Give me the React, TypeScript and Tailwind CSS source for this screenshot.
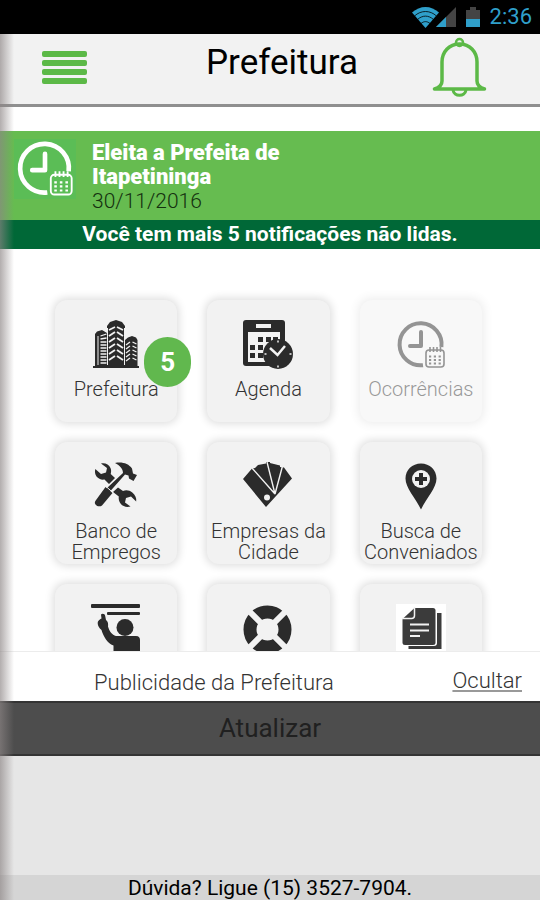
import React from 'react';

interface MenuItem {
  id: string;
  name: string;
  label?: string;
  icon: React.ReactNode;
  badge?: number;
  disabled?: boolean;
}

function ClockCalendarIcon({ className }: { className: string }) {
  return (
    <svg viewBox="0 0 50 50" className={className} fill="none" stroke="currentColor">
      <path d="M27 45.2A21 21 0 1 1 45.4 27" strokeWidth="4" />
      <path d="M25 12v14H14" strokeWidth="4" strokeLinecap="round" strokeLinejoin="round" />
      <rect x="30" y="30" width="18" height="17" rx="3" strokeWidth="1.600" />
      <path d="M34 27v5M37.500 27v5M41 27v5M44.500 27v5" strokeWidth="1.600" />
      <path d="M33 36.500h12M33 40h12M33 43.500h12" strokeWidth="1.800" strokeDasharray="2.200 2.600" />
    </svg>
  );
}

function BuildingsIcon() {
  return (
    <svg viewBox="0 0 50 50" className="h-[50px] w-[50px] text-[#2b2b2b]" fill="currentColor">
      <path d="M2 48v-2h2V14l2-2.500 5-1.500 5 3V6l3-4 6-2 6 2 3 4v14l3-2.500 4-1.500 4 1.500L46.500 20v26H48v2z" />
      <g fill="none" stroke="#f2f2f2" strokeWidth="1.800">
        <path d="M18 10l6-3M18 16l6-4M18 22l6-4M18 28l6-4M18 34l6-4M18 40l6-4" />
        <path d="M32 10l-6-3M32 16l-6-4M32 22l-6-4M32 28l-6-4M32 34l-6-4M32 40l-6-4" />
      </g>
      <g fill="none" stroke="#f2f2f2" strokeWidth="1.300">
        <path d="M9.500 16l6-2M9.500 19l6-1M9.500 22h6M9.500 25h6M9.500 28h6M9.500 31h6M9.500 34h6M9.500 37h6M9.500 40h6M9.500 43h6" />
        <path d="M35 25l4-3M35 29l4-3M35 33l4-3M35 37l4-3M35 41l4-3" />
        <path d="M45.500 24l-4-2M45.500 28l-4-2M45.500 32l-4-2M45.500 36l-4-2M45.500 40l-4-2" />
        <path d="M16.500 8v37M33.500 8v37M7 16v29" strokeWidth="1" />
      </g>
    </svg>
  );
}

function AgendaIcon() {
  return (
    <svg viewBox="0 0 50 50" className="h-[50px] w-[50px] text-[#2b2b2b]" fill="currentColor">
      <rect width="42" height="46" rx="3" />
      <rect x="13" y="4" width="15" height="4" fill="#f2f2f2" />
      <rect x="5" y="12" width="32" height="30" fill="#f2f2f2" />
      <path d="M15 17h5v5h-5zM23 17h5v5h-5zM30 17h5v5h-5zM7 25h5v5H7zM15 25h5v5h-5zM7 33h5v5H7zM15 33h5v5h-5z" />
      <circle cx="35" cy="34" r="15" />
      <path d="M27 28l7.500 7L42 26" fill="none" stroke="#f2f2f2" strokeWidth="2.500" />
      <path d="M35 20.500v2M35 45.500v2M21.500 34h2M46.500 34h2" stroke="#f2f2f2" strokeWidth="1.500" />
    </svg>
  );
}

function ToolsIcon() {
  return (
    <svg viewBox="0 0 50 50" className="h-[50px] w-[50px] text-[#2b2b2b]" fill="currentColor">
      <path d="M10 1.500c4-1 8 1 9.500 4.500.9 2.200.7 4 .2 6L24 16l-6 6-4.500-4.500c-3 .5-6-.5-8-3C4 12.500 3.600 9.500 4.300 7L10 12l5-1.500 1-4.500z" />
      <path d="M27 25.500l5 3.500c3-1.200 6.500-.8 9.300 1.500 3 2.500 4.400 5.800 3.900 9L40 34.500l-5 1.500-1 4.500 5.500 4c-3.500 1-7.500.3-9.800-2.700-1.700-2.200-2.300-4.700-1.900-7.200L22 30z" />
      <path d="M24 1c7-1.500 13.500.500 17 5.500l1 5 4 1.500-3.500 6-4.500-2.500-.5-3-3.500-1-15 17-3.500-3L32 11c0-4-3-7.500-8-10z" />
      <path d="M14.500 25l7 6L11 43.500c-2 1.500-5 1-6.500-1-1-1.500-.8-2.800.2-4z" />
      <path d="M15 24.500l7.500 6.500" fill="none" stroke="#f2f2f2" strokeWidth="1" />
    </svg>
  );
}

function SwatchesIcon() {
  return (
    <svg viewBox="0 0 50 50" className="h-[50px] w-[50px] text-[#2b2b2b]" fill="currentColor">
      <path d="M0 17L9 6.500l3-.5 3-3 8-1.500V-1l4 .5V1l10 2.500v1.500l4 .5L49 16.500 23 45z" />
      <path d="M9 6l23 26L24 0M39.500 4L32 32" fill="none" stroke="#f2f2f2" strokeWidth="1.400" />
      <circle cx="24" cy="35.500" r="3" fill="#f2f2f2" />
    </svg>
  );
}

function PinIcon() {
  return (
    <svg viewBox="0 0 50 50" className="h-[50px] w-[50px] text-[#2b2b2b]" fill="currentColor">
      <path d="M25 1.500c8.800 0 15.500 6.500 15.500 15C40.500 26 31 35 25 47.500 19 35 9.500 26 9.500 16.500c0-8.500 6.700-15 15.500-15z" />
      <circle cx="25" cy="17" r="9" fill="#f2f2f2" />
      <path d="M25 11v12M19 17h12" stroke="currentColor" strokeWidth="4" />
    </svg>
  );
}

function PassengerIcon() {
  return (
    <svg viewBox="0 0 50 50" className="h-[50px] w-[50px] text-[#2b2b2b]" fill="currentColor">
      <rect y="0" width="49" height="4" rx="1" />
      <rect x="16" y="8" width="33" height="3" rx="1" />
      <circle cx="34" cy="23.500" r="8.500" />
      <path d="M10 10.500c1.500-1.500 4-.5 4.200 1.500l.8 4c2 1.500 2.300 3.500 2 6.500 1.500 5 4 8.500 8 9.500h20c3 0 4 2 4 4v14H22.500v-8.500C16 39 12.500 32.500 10.500 26 7.500 23.500 6 20 7 17.500c1-1.500 2-2.500 3.500-3z" />
    </svg>
  );
}

function LifebuoyIcon() {
  return (
    <svg viewBox="0 0 50 50" className="h-[50px] w-[50px] text-[#2b2b2b]" fill="none">
      <circle cx="24.500" cy="25.500" r="17.500" stroke="currentColor" strokeWidth="13" />
      <path d="M6 7l37 37M43 7L6 44" stroke="#f2f2f2" strokeWidth="6" />
    </svg>
  );
}

function DocumentsIcon() {
  return (
    <svg viewBox="0 0 50 50" className="h-[50px] w-[50px] bg-white text-[#3b3b3b]" fill="currentColor">
      <path d="M41 9h4.500v36H12.500v-3H38a3 3 0 0 0 3-3z" />
      <path d="M18.500 4H37a2.500 2.500 0 0 1 2.500 2.500v32A2.500 2.500 0 0 1 37 41H9a2.500 2.500 0 0 1-2.500-2.500V15z" />
      <path d="M18.500 3v8.500a3 3 0 0 1-3 3H6" fill="none" stroke="#f2f2f2" strokeWidth="1.500" />
      <path d="M14 20.500h19M14 26.500h19M14 32h10" stroke="#f2f2f2" strokeWidth="2" />
    </svg>
  );
}

const menuItems: MenuItem[] = [
  { id: 'prefeitura', name: 'Prefeitura', label: 'Prefeitura', icon: <BuildingsIcon />, badge: 5 },
  { id: 'agenda', name: 'Agenda', label: 'Agenda', icon: <AgendaIcon /> },
  {
    id: 'ocorrencias',
    name: 'Ocorrências',
    label: 'Ocorrências',
    icon: <ClockCalendarIcon className="h-[50px] w-[50px] text-[#2b2b2b]" />,
    disabled: true
  },
  { id: 'empregos', name: 'Banco de Empregos', label: 'Banco de Empregos', icon: <ToolsIcon /> },
  { id: 'empresas', name: 'Empresas da Cidade', label: 'Empresas da Cidade', icon: <SwatchesIcon /> },
  { id: 'conveniados', name: 'Busca de Conveniados', label: 'Busca de Conveniados', icon: <PinIcon /> },
  { id: 'transporte', name: 'Transporte', icon: <PassengerIcon /> },
  { id: 'ajuda', name: 'Ajuda', icon: <LifebuoyIcon /> },
  { id: 'documentos', name: 'Documentos', icon: <DocumentsIcon /> }
];

function StatusBar() {
  return (
    <div className="flex h-[34px] shrink-0 items-center justify-end bg-black pr-2 text-[#2f9fca]">
      <svg viewBox="0 0 70 24" className="mr-2 h-6 w-[70px]">
        <path d="M0 7.500C8 0 19 0 27 7.500L13.500 23z" fill="#2f9fca" />
        <path d="M2.500 11c6.500-6 15.500-6 22 0M5.500 14.500c5-4.500 11-4.500 16 0M9 18.500c3-2.500 6-2.500 9 0" fill="none" stroke="#000" strokeWidth="0.800" />
        <path d="M44 2v20H24z" fill="#444" />
        <path d="M34 12v10H24z" fill="#2f9fca" />
        <path d="M54 5h4V2h6v3h4v9H54z" fill="#444" />
        <path d="M54 14h14v8H54z" fill="#2f9fca" />
      </svg>
      <span className="text-[22px] leading-6">2:36</span>
    </div>
  );
}

function MenuCard({ item }: { item: MenuItem }) {
  return (
    <button
      type="button"
      aria-label={item.name}
      disabled={item.disabled}
      className="relative flex h-[122px] flex-col items-center rounded-xl bg-[#f2f2f2] pt-5
                 shadow-[0_0_8px_2px_#dedede] disabled:opacity-50"
    >
      {item.icon}
      {item.label && (
        <span className="mt-[9px] text-[20px] leading-[21px] font-light text-[#333]">{item.label}</span>
      )}
      {item.badge && (
        <span
          className="absolute top-[37px] -right-[14px] flex h-[50px] w-[47px] items-center justify-center
                     rounded-full bg-[#61b84e] text-[26px] font-bold text-white"
        >
          {item.badge}
        </span>
      )}
    </button>
  );
}

export default function App() {
  return (
    <div className="relative flex h-screen flex-col overflow-hidden bg-white font-['Roboto',sans-serif] text-black">
      <StatusBar />

      <header className="flex h-[73px] shrink-0 items-center border-b-3 border-[#8f8f8f] bg-[#f2f2f2] pr-[52px] pb-1 pl-[42px]">
        <button type="button" aria-label="Menu" className="flex w-[90px] flex-col gap-[3px]">
          <span className="h-[6px] w-[45px] rounded-xs bg-[#5cb947]" />
          <span className="h-[6px] w-[45px] rounded-xs bg-[#5cb947]" />
          <span className="h-[6px] w-[45px] rounded-xs bg-[#5cb947]" />
          <span className="h-[6px] w-[45px] rounded-xs bg-[#5cb947]" />
        </button>
        <h1 className="flex-1 pb-2 text-center text-[35px] leading-10">Prefeitura</h1>
        <button type="button" aria-label="Notificações">
          <svg viewBox="0 0 56 60" className="h-[60px] w-14" fill="none" stroke="#5cb947" strokeWidth="3.500">
            <path d="M2.500 52h50c-5-1.500-7.500-4-7.500-8V25c0-10-7-18-17.500-18S10 15 10 25v19c0 4-2.500 6.500-7.500 8z" strokeLinejoin="round" />
            <circle cx="27.500" cy="5.500" r="3.500" strokeWidth="2.500" />
            <path d="M21 53c1 7 12 7 13 0" strokeWidth="3" />
          </svg>
        </button>
      </header>

      <section className="mt-6 shrink-0">
        <div className="flex h-[89px] items-start gap-4 bg-[#66bc50] pt-2 pl-[14px]">
          <div className="flex h-[60px] w-[62px] items-center justify-center bg-[#5bbd56] text-white">
            <ClockCalendarIcon className="h-[58px] w-[58px]" />
          </div>
          <div className="mt-[2px] w-[240px] leading-6">
            <h2 className="text-[22px] leading-6 font-black text-white">Eleita a Prefeita de Itapetininga</h2>
            <p className="text-[21px] leading-6 font-light text-[#14300f]">30/11/2016</p>
          </div>
        </div>
        <p className="bg-[#006837] text-center text-[21px] leading-[29px] font-bold text-white">
          Você tem mais 5 notificações não lidas.
        </p>
      </section>

      <main className="min-h-0 flex-1 overflow-y-auto pt-[51px] pr-[58px] pl-[55px] [scrollbar-width:none]">
        <div className="grid grid-cols-3 gap-x-[30px] gap-y-5">
          {menuItems.map((item) => (
            <MenuCard key={item.id} item={item} />
          ))}
        </div>
      </main>

      <footer className="relative shrink-0">
        <div className="flex h-[50px] items-center justify-between border-t border-[#ececec] bg-white pr-[18px] pl-[94px] font-light text-[#333]">
          <span className="pt-3 text-[22px]">Publicidade da Prefeitura</span>
          <a href="#ocultar" className="pt-2 text-[22px] underline decoration-[#999]">Ocultar</a>
        </div>
        <button
          type="button"
          className="h-[55px] w-full border-y-2 border-[#343434] bg-[#4d4d4d] text-[26px] text-[#202020]"
        >
          Atualizar
        </button>
        <div className="h-[119px] bg-[#e6e6e6]" />
        <p className="h-[25px] bg-[#d5d5d5] text-center text-[21px] leading-[27px]">
          Dúvida? Ligue (15) 3527-7904.
        </p>
      </footer>

      {/* drawer shadow on the left edge */}
      <div className="pointer-events-none absolute top-[34px] bottom-0 left-0 w-[14px] bg-linear-to-r from-[#8c8585aa] to-transparent" />
    </div>
  );
}
